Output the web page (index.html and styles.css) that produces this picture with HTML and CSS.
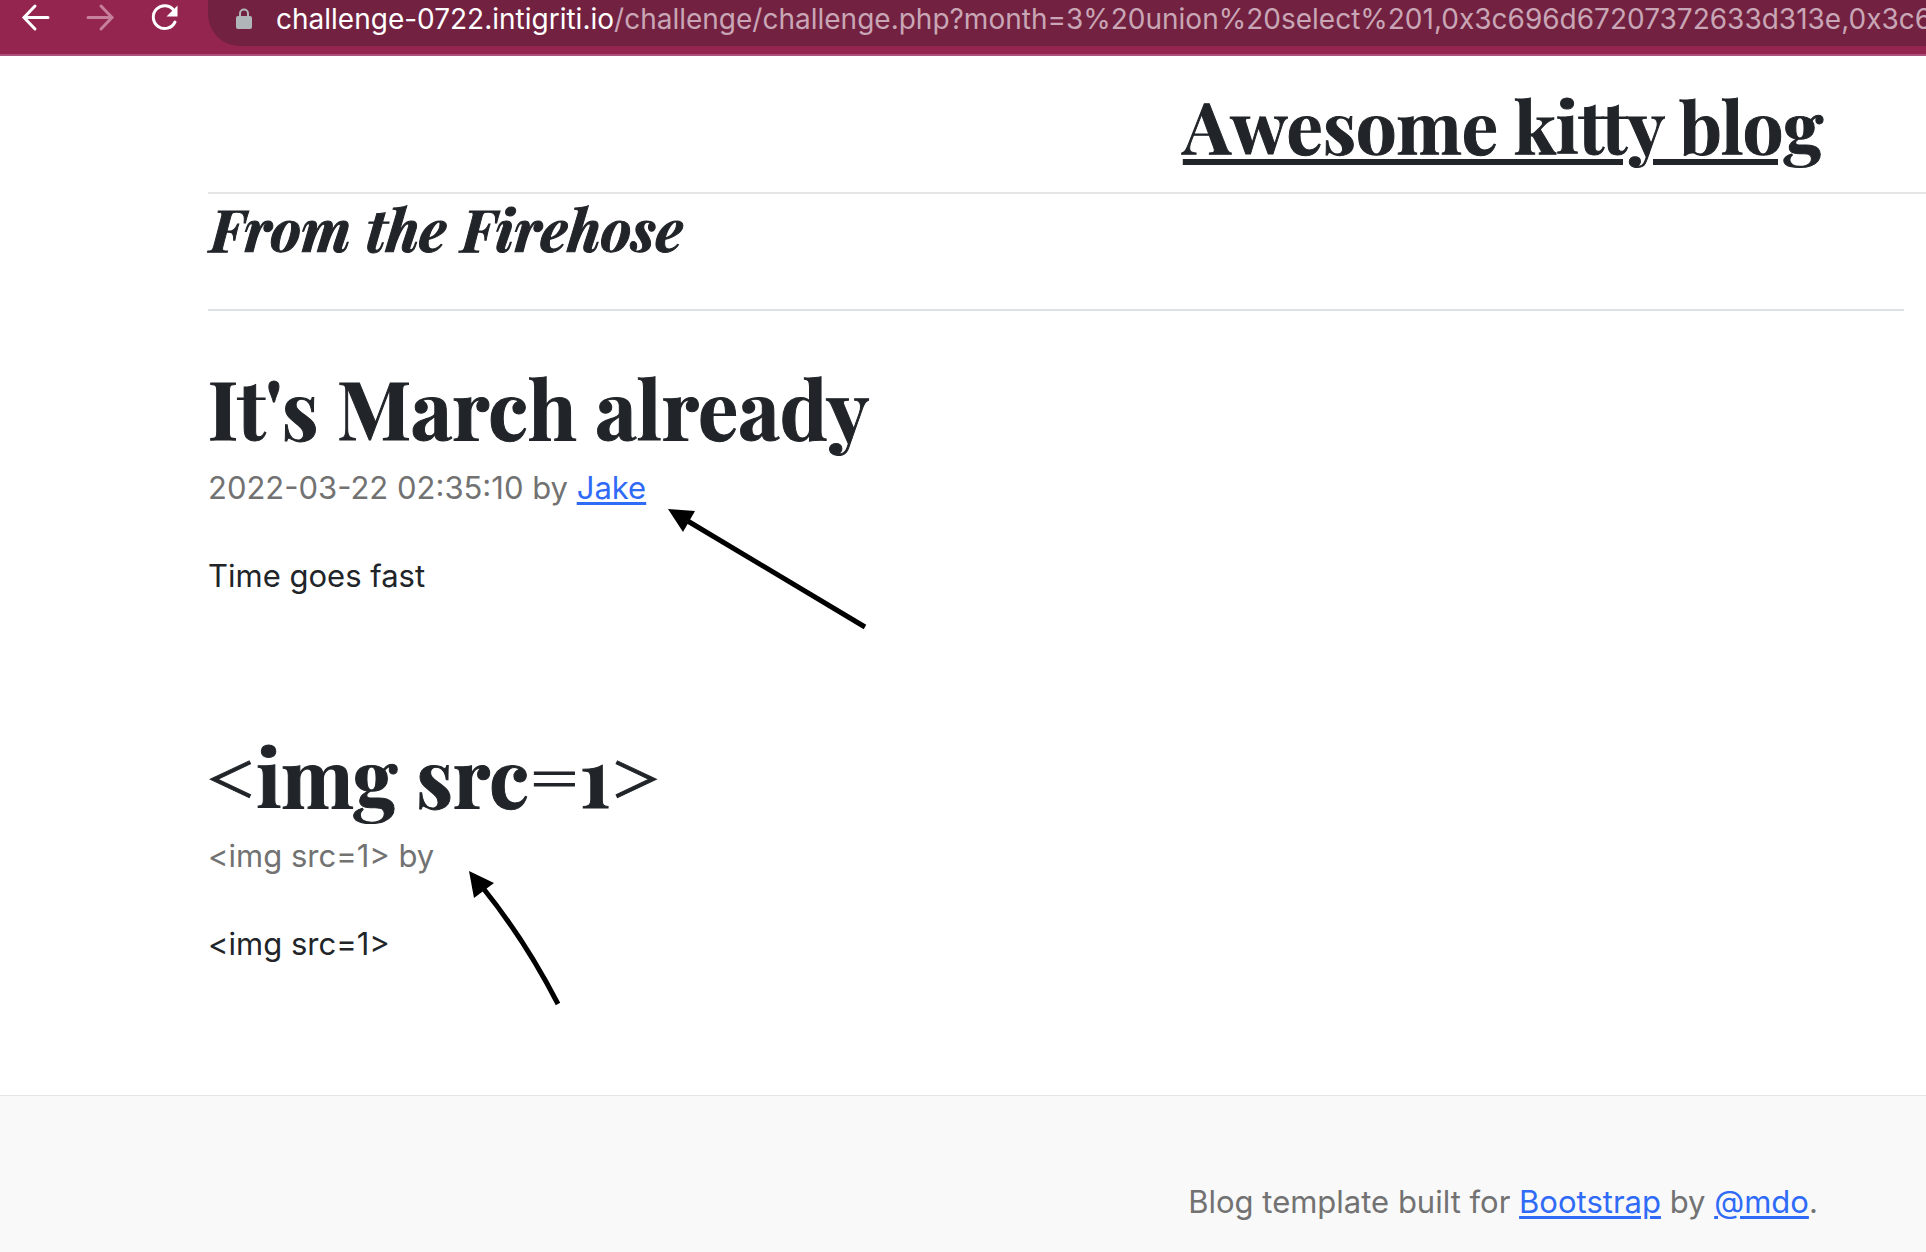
FILE: index.html
```html
<!DOCTYPE html>
<html lang="en">
<head>
<meta charset="utf-8">
<meta name="viewport" content="width=device-width, initial-scale=1">
<title>Awesome kitty blog</title>
<link rel="stylesheet" href="styles.css">
</head>
<body>
<div class="toolbar">
  <nav class="nav-buttons" aria-label="Browser">
    <button class="nav-button" type="button" aria-label="Back">
      <svg class="nav-icon" viewBox="0 0 32 32"><path d="M28 15.500H4.500M15 4 4 15.500 15 27"/></svg>
    </button>
    <button class="nav-button nav-button-off" type="button" aria-label="Forward">
      <svg class="nav-icon" viewBox="0 0 32 32"><path d="M4 15.500h23.500M17 4l11 11.500L17 27"/></svg>
    </button>
    <button class="nav-button" type="button" aria-label="Reload">
      <svg class="nav-icon" viewBox="0 0 32 32"><path d="M26 8.500A11.400 11.400 0 1 0 27 20"/><path class="solid" d="M29.500 3.500V14.500H18.500z"/></svg>
    </button>
  </nav>
  <div class="address">
    <svg class="lock" viewBox="0 0 16 22"><path class="shackle" d="M4 9V5.500a4 4 0 0 1 8 0V9"/><rect y="8" width="16" height="13" rx="2"/></svg>
    <div class="url" role="textbox" aria-label="Address"><span class="host">challenge-0722.intigriti.io</span>/challenge/challenge.php?month=3%20union%20select%201,0x3c696d67207372633d313e,0x3c6</div>
  </div>
</div>

<header class="masthead">
  <h1 class="brand"><a href="#">Awesome kitty blog</a></h1>
</header>

<main class="content">
  <h2 class="section-title">From the Firehose</h2>

  <article class="post">
    <h3 class="post-title">It's March already</h3>
    <p class="post-meta">2022-03-22 02:35:10 by <a href="#">Jake</a></p>
    <p class="post-body">Time goes fast</p>
    <svg class="arrow arrow-author" viewBox="0 0 200 122"><path class="shaft" d="M18 11 197 118"/><path d="M0 0 27 2 15 23z"/></svg>
  </article>

  <article class="post">
    <h3 class="post-title">&lt;img src=1&gt;</h3>
    <p class="post-meta">&lt;img src=1&gt; by</p>
    <p class="post-body">&lt;img src=1&gt;</p>
    <svg class="arrow arrow-empty" viewBox="0 0 94 136"><path class="shaft" d="M14 17Q56 69 89 133"/><path d="M0 0 25 12 5 27z"/></svg>
  </article>
</main>

<footer class="footer">
  <p>Blog template built for <a href="#">Bootstrap</a> by <a href="#">@mdo</a>.</p>
</footer>
</body>
</html>
```
FILE: styles.css
```css
* {
  box-sizing: border-box;
}

body {
  margin: 0;
  min-height: 100vh;
  display: flex;
  flex-direction: column;
  overflow-x: hidden;
  background: #fff;
  color: #212529;
  font-family: Inter, "Liberation Sans", sans-serif;
  font-size: 31px;
  line-height: 48px;
}

h1, h2, h3, p {
  margin: 0;
}

a {
  color: #2f6bf6;
  text-decoration-thickness: 3px;
  text-underline-offset: 3px;
}

/* Browser toolbar */
.toolbar {
  display: flex;
  align-items: flex-start;
  height: 56px;
  background: #94254e;
  border-bottom: 2px solid #a9517a;
}

.nav-buttons {
  display: flex;
  gap: 32px;
  padding: 0 28px 0 20px;
}

.nav-button {
  width: 32px;
  height: 36px;
  padding: 2px 0;
  border: 0;
  background: none;
  color: #fff;
}

.nav-button-off {
  color: #c7809b;
}

.nav-icon {
  display: block;
  width: 32px;
  height: 32px;
  fill: none;
  stroke: currentColor;
  stroke-width: 3;
  stroke-linecap: round;
}

.nav-icon .solid {
  fill: currentColor;
  stroke: none;
}

.address {
  flex: 1;
  min-width: 0;
  display: flex;
  align-items: center;
  gap: 24px;
  height: 46px;
  padding: 0 0 8px 28px;
  border-radius: 0 0 0 32px;
  background: #722141;
}

.lock {
  flex: none;
  width: 16px;
  height: 22px;
  fill: #b0b5ba;
}

.shackle {
  fill: none;
  stroke: #b0b5ba;
  stroke-width: 2;
}

.url {
  flex: 1;
  overflow: hidden;
  white-space: nowrap;
  color: #c8a6b5;
  font-size: 28px;
  line-height: 38px;
}

.host {
  color: #fff;
}

/* Blog */
.brand, .section-title, .post-title {
  font-family: "Playfair Display", "Liberation Serif", serif;
  font-weight: 700;
  -webkit-text-stroke: 1px currentColor;
}

.masthead {
  margin-left: 208px;
  padding: 20px 0 20px 872px;
  border-bottom: 2px solid #e5e5e5;
  text-align: center;
}

.brand {
  font-size: 72px;
  line-height: 96px;
  white-space: nowrap;
}

.brand a {
  color: inherit;
  text-decoration-thickness: 6px;
  text-underline-offset: 5px;
}

.content {
  padding: 0 22px 0 208px;
}

.section-title {
  padding: 2px 0 49px 2px;
  border-bottom: 2px solid #dee2e6;
  font-size: 58px;
  font-style: italic;
  line-height: 64px;
}

.post {
  position: relative;
  padding-top: 48px;
}

.post + .post {
  padding-top: 127px;
}

.post-title {
  margin-bottom: 9px;
  font-size: 80px;
  line-height: 96px;
}

.post-meta {
  margin-bottom: 40px;
  color: #727272;
}

.post:last-child {
  padding-bottom: 127px;
}

.arrow {
  position: absolute;
}

.shaft {
  fill: none;
  stroke: #000;
  stroke-width: 5;
}

.arrow-author {
  top: 198px;
  left: 460px;
  width: 200px;
}

.arrow-empty {
  top: 271px;
  left: 261px;
  width: 94px;
}

.footer {
  flex: 1;
  padding: 82px 0 24px 1080px;
  border-top: 1px solid #e5e5e5;
  background: #f9f9f9;
  color: #727272;
  text-align: center;
  white-space: nowrap;
}
```
